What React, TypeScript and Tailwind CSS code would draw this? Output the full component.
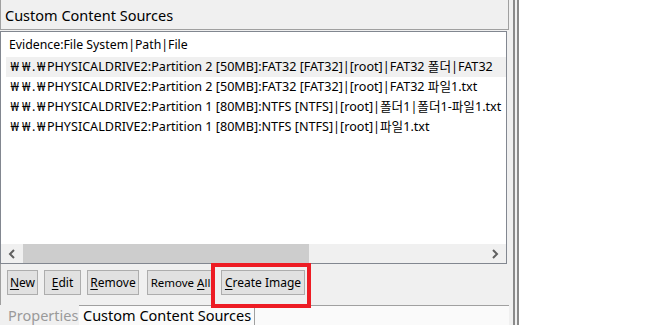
const uiFont = { fontFamily: '"Noto Sans", "Noto Sans CJK KR", sans-serif' };

const rows = [
  "PHYSICALDRIVE2:Partition 2 [50MB]:FAT32 [FAT32]|[root]|FAT32 폴더|FAT32",
  "PHYSICALDRIVE2:Partition 2 [50MB]:FAT32 [FAT32]|[root]|FAT32 파일1.txt",
  "PHYSICALDRIVE2:Partition 1 [80MB]:NTFS [NTFS]|[root]|폴더1|폴더1-파일1.txt",
  "PHYSICALDRIVE2:Partition 1 [80MB]:NTFS [NTFS]|[root]|파일1.txt",
];

function Won() {
  return <span className="inline-block w-[11.5px] text-center">₩</span>;
}

function Btn({ pre, key1, post, className }: { pre?: string; key1: string; post?: string; className: string }) {
  return (
    <div
      className={
        "h-[25px] flex items-center justify-center border border-[#adadad] bg-[#e1e1e1] text-black whitespace-pre " +
        className
      }
    >
      <span>
        {pre}
        <span className="underline underline-offset-2">{key1}</span>
        {post}
      </span>
    </div>
  );
}

export default function App() {
  return (
    <div className="relative flex w-[654px] h-[325px] overflow-hidden bg-white text-black" style={uiFont}>
      {/* left panel */}
      <div className="w-[513px] bg-[#f0f0f0] flex flex-col">
        <div className="h-[30px] w-[509px] border-l border-r border-b border-[#a0a0a0] flex items-center pl-[4px] pt-[1px] text-[14.5px] leading-none">
          Custom Content Sources
        </div>

        <div className="mt-[1px] w-[507px] h-[233px] border border-[#828790] bg-white flex flex-col">
          <div className="flex-1 overflow-hidden pt-[3px] pl-[5px]">
            <div className="h-[20px] flex items-center pl-[3px] text-[12.3px] whitespace-nowrap">
              Evidence:File System|Path|File
            </div>
            <div className="mt-[2px]">
              {rows.map((r, i) => (
                <div
                  key={i}
                  className={
                    "h-[20px] flex items-center pl-[3px] text-[12.6px] whitespace-nowrap overflow-hidden " +
                    (i === 0 ? "bg-[#f0f0f0]" : "")
                  }
                >
                  <span>
                    <Won />
                    <Won />.<Won />
                    {r}
                  </span>
                </div>
              ))}
            </div>
          </div>
          {/* horizontal scrollbar */}
          <div className="h-[19px] flex bg-[#f0f0f0]">
            <div className="w-[22px] flex items-center justify-center">
              <svg width="8" height="10" viewBox="0 0 8 10">
                <path d="M6 1 L2 5 L6 9" fill="none" stroke="#606060" strokeWidth="2" />
              </svg>
            </div>
            <div className="w-[286px] bg-[#cdcdcd]" />
            <div className="flex-1" />
            <div className="w-[22px] flex items-center justify-center">
              <svg width="8" height="10" viewBox="0 0 8 10">
                <path d="M2 1 L6 5 L2 9" fill="none" stroke="#606060" strokeWidth="2" />
              </svg>
            </div>
          </div>
        </div>

        {/* buttons */}
        <div className="h-[41px] flex items-start pt-[6px] pl-[6px] border-l border-[#a0a0a0]">
          <Btn key1="N" post="ew" className="w-[31px] text-[12px]" />
          <Btn key1="E" post="dit" className="w-[37px] ml-[6px] text-[12px]" />
          <Btn key1="R" post="emove" className="w-[52px] ml-[6px] text-[12px]" />
          <Btn pre="Remove " key1="A" post="ll" className="w-[67px] ml-[8px] text-[11.5px]" />
          <Btn key1="C" post="reate Image" className="w-[84px] ml-[7px] text-[12px]" />
        </div>

        {/* tabs */}
        <div className="flex-1 flex">
          <div className="w-[79px] pl-[8px] text-[14.5px] leading-[20px] text-[#9a9a9a] whitespace-nowrap">
            Properties
          </div>
          <div className="w-[430px] border-t border-[#a0a0a0] bg-[#fafafa] flex">
            <div className="w-[176px] border-r border-[#a0a0a0] pl-[4px] text-[14.5px] leading-[19px] whitespace-nowrap">
              Custom Content Sources
            </div>
          </div>
        </div>
      </div>

      {/* splitter */}
      <div className="w-[6px] border-l-2 border-r-2 border-[#8a8a8a] bg-[#f0f0f0]" />
      <div className="flex-1 bg-white" />

      {/* red annotation */}
      <div className="absolute left-[211px] top-[263px] w-[100px] h-[45px] border-4 border-[#ed1c24]" />
    </div>
  );
}
